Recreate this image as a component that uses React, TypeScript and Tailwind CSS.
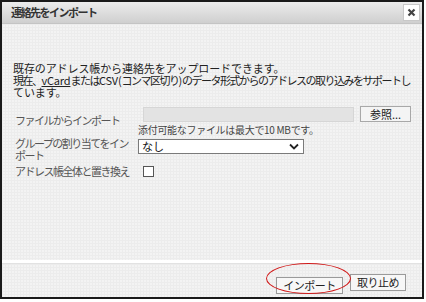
import React from "react";

const font = { fontFamily: "'Noto Sans CJK JP', 'Liberation Sans', sans-serif" };

const App = () => {
    return (
        <div className="w-[426px] h-[302px] bg-white" style={font}>
            <div className="w-[424px] h-[299px] border-2 border-[#1a1a1a] flex flex-col bg-[#f3f3f3]">
                {/* title bar */}
                <div className="h-[22px] flex items-center justify-between pl-[9px] pr-[2px] bg-gradient-to-b from-[#ececec] to-[#cfcfcf] border-b border-[#c4c4c4]">
                    <span className="text-[11px] font-bold text-[#333] leading-none tracking-[-1.5px]">連絡先をインポート</span>
                    <button className="w-[17px] h-[17px] bg-white border border-[#c8c8c8] flex items-center justify-center">
                        <svg width="9" height="9" viewBox="0 0 9 9">
                            <path d="M1.5 1.5 L7.5 7.5 M7.5 1.5 L1.5 7.5" stroke="#444" strokeWidth="2.2" />
                        </svg>
                    </button>
                </div>

                {/* body */}
                <div className="flex-1 px-[11px] pt-[38px] bg-[#f3f3f3] bg-[linear-gradient(#ececec_1px,transparent_1px),linear-gradient(90deg,#ececec_1px,transparent_1px)] bg-[size:3px_3px]">
                    <p className="text-[11px] leading-[12px] text-[#222] whitespace-nowrap">
                        <span className="tracking-[-0.1px]">既存のアドレス帳から連絡先をアップロードできます。</span><br />
                        <span className="tracking-[-1.5px]">
                            現在、<span className="underline tracking-[-0.2px]">vCard</span>または<span className="tracking-[-0.2px]">CSV(</span>コンマ区切り<span className="tracking-[-0.2px]">)</span>のデータ形式からのアドレスの取り込みをサポートし
                        </span><br />
                        <span className="tracking-[-0.1px]">ています。</span>
                    </p>

                    <div className="mt-[8px] grid grid-cols-[125px_1fr] text-[11px] text-[#555] tracking-[-1.5px] whitespace-nowrap">
                        <div className="pt-[8px] pl-[2px] leading-[13px]">ファイルからインポート</div>
                        <div className="tracking-normal">
                            <div className="flex items-center h-[16px]">
                                <div className="flex-1 h-[15px] bg-[#e3e3e3] border border-[#d6d6d6] ml-[5px]" />
                                <button className="h-[16px] w-[51px] ml-[6px] bg-[#f4f4f4] border border-[#a8a8a8] text-[11px] text-[#222] leading-none">参照...</button>
                            </div>
                            <div className="text-[10px] text-[#444] leading-[12px] mt-[2px] tracking-[-0.3px]">添付可能なファイルは最大で10 MBです。</div>
                        </div>

                        <div className="pl-[2px] leading-[12px] mt-[1px]">グループの割り当てをイン<br />ポート</div>
                        <div className="mt-[3px] tracking-normal">
                            <div className="w-[166px] h-[15px] bg-white border border-[#7a7a7a] flex items-center justify-between pl-[3px] pr-[4px]">
                                <span className="text-[11px] text-[#111] leading-none">なし</span>
                                <svg width="10" height="7" viewBox="0 0 10 7">
                                    <path d="M1 1.5 L5 5.5 L9 1.5" stroke="#222" strokeWidth="1.8" fill="none" />
                                </svg>
                            </div>
                        </div>

                        <div className="pl-[2px] mt-[4px] leading-[13px]">アドレス帳全体と置き換え</div>
                        <div className="mt-[5px] pl-[5px]">
                            <div className="w-[11px] h-[11px] bg-white border border-[#555]" />
                        </div>
                    </div>
                </div>

                {/* footer */}
                <div className="h-[3px] bg-white" />
                <div className="h-[34px] pt-[4px] border-t border-[#e2e2e2] bg-[#f3f3f3] flex items-center justify-end pr-[16px] bg-[linear-gradient(#ececec_1px,transparent_1px),linear-gradient(90deg,#ececec_1px,transparent_1px)] bg-[size:3px_3px]">
                    <div className="relative">
                        <button className="h-[17px] w-[67px] bg-[#f7f7f7] border border-[#9a9a9a] text-[11px] text-[#222] leading-none tracking-[-0.5px]">インポート</button>
                        <div className="absolute left-[-10px] top-[-8px] w-[85px] h-[31px] rounded-[50%] border-[1.5px] border-[#d11a1a]" />
                    </div>
                    <button className="h-[17px] w-[56px] ml-[7px] bg-[#f7f7f7] border border-[#9a9a9a] text-[11px] text-[#222] leading-none tracking-[-0.5px]">取り止め</button>
                </div>
            </div>
        </div>
    );
};

export default App;
